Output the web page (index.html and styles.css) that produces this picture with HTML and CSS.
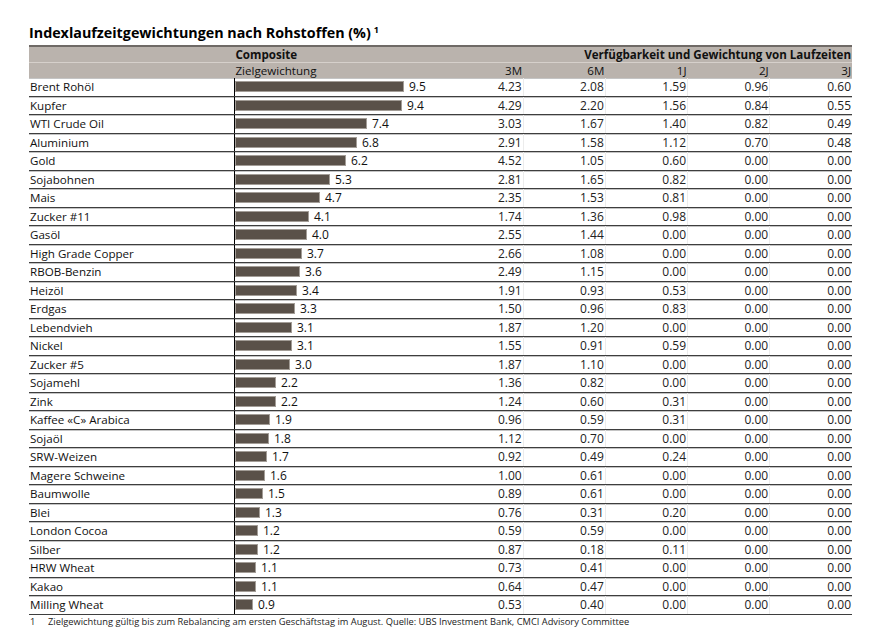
FILE: index.html
```html
<!DOCTYPE html>
<html lang="de">

<head>
    <meta charset="UTF-8">
    <meta name="viewport" content="width=device-width, initial-scale=1.0">
    <title>Indexlaufzeitgewichtungen</title>
    <link rel="stylesheet" href="styles.css">
</head>

<body>
    <div class="page">
        <h1 class="title">Indexlaufzeitgewichtungen nach Rohstoffen (%)<sup>1</sup></h1>
        <table class="weights">
            <colgroup>
                <col class="c-name">
                <col class="c-comp">
                <col class="c-num">
                <col class="c-num">
                <col class="c-num">
                <col class="c-num">
                <col class="c-num">
            </colgroup>
            <thead>
                <tr class="head1">
                    <th></th>
                    <th class="comp">Composite</th>
                    <th class="num" colspan="5">Verfügbarkeit und Gewichtung von Laufzeiten</th>
                </tr>
                <tr class="head2">
                    <th></th>
                    <th class="comp">Zielgewichtung</th>
                    <th class="num">3M</th>
                    <th class="num">6M</th>
                    <th class="num">1J</th>
                    <th class="num">2J</th>
                    <th class="num">3J</th>
                </tr>
            </thead>
            <tbody id="rows"></tbody>
        </table>
        <div class="note"><span class="note-no">1</span>Zielgewichtung gültig bis zum Rebalancing am ersten Geschäftstag im August. Quelle: UBS Investment Bank, CMCI Advisory Committee</div>
    </div>
    <script>
        var data = [
            ["Brent Rohöl", 9.5, "4.23", "2.08", "1.59", "0.96", "0.60"],
            ["Kupfer", 9.4, "4.29", "2.20", "1.56", "0.84", "0.55"],
            ["WTI Crude Oil", 7.4, "3.03", "1.67", "1.40", "0.82", "0.49"],
            ["Aluminium", 6.8, "2.91", "1.58", "1.12", "0.70", "0.48"],
            ["Gold", 6.2, "4.52", "1.05", "0.60", "0.00", "0.00"],
            ["Sojabohnen", 5.3, "2.81", "1.65", "0.82", "0.00", "0.00"],
            ["Mais", 4.7, "2.35", "1.53", "0.81", "0.00", "0.00"],
            ["Zucker #11", 4.1, "1.74", "1.36", "0.98", "0.00", "0.00"],
            ["Gasöl", 4.0, "2.55", "1.44", "0.00", "0.00", "0.00"],
            ["High Grade Copper", 3.7, "2.66", "1.08", "0.00", "0.00", "0.00"],
            ["RBOB-Benzin", 3.6, "2.49", "1.15", "0.00", "0.00", "0.00"],
            ["Heizöl", 3.4, "1.91", "0.93", "0.53", "0.00", "0.00"],
            ["Erdgas", 3.3, "1.50", "0.96", "0.83", "0.00", "0.00"],
            ["Lebendvieh", 3.1, "1.87", "1.20", "0.00", "0.00", "0.00"],
            ["Nickel", 3.1, "1.55", "0.91", "0.59", "0.00", "0.00"],
            ["Zucker #5", 3.0, "1.87", "1.10", "0.00", "0.00", "0.00"],
            ["Sojamehl", 2.2, "1.36", "0.82", "0.00", "0.00", "0.00"],
            ["Zink", 2.2, "1.24", "0.60", "0.31", "0.00", "0.00"],
            ["Kaffee «C» Arabica", 1.9, "0.96", "0.59", "0.31", "0.00", "0.00"],
            ["Sojaöl", 1.8, "1.12", "0.70", "0.00", "0.00", "0.00"],
            ["SRW-Weizen", 1.7, "0.92", "0.49", "0.24", "0.00", "0.00"],
            ["Magere Schweine", 1.6, "1.00", "0.61", "0.00", "0.00", "0.00"],
            ["Baumwolle", 1.5, "0.89", "0.61", "0.00", "0.00", "0.00"],
            ["Blei", 1.3, "0.76", "0.31", "0.20", "0.00", "0.00"],
            ["London Cocoa", 1.2, "0.59", "0.59", "0.00", "0.00", "0.00"],
            ["Silber", 1.2, "0.87", "0.18", "0.11", "0.00", "0.00"],
            ["HRW Wheat", 1.1, "0.73", "0.41", "0.00", "0.00", "0.00"],
            ["Kakao", 1.1, "0.64", "0.47", "0.00", "0.00", "0.00"],
            ["Milling Wheat", 0.9, "0.53", "0.40", "0.00", "0.00", "0.00"]
        ]
        var rows = document.getElementById("rows")
        var html = ""
        for (var i = 0; i < data.length; i++) {
            var d = data[i]
            html += "<tr>"
            html += "<td class='name'>" + d[0] + "</td>"
            html += "<td class='comp'><div class='bar-cell'><span class='bar' style='width:" + Math.round(d[1] * 17.6) + "px'></span>" + d[1].toFixed(1) + "</div></td>"
            for (var j = 2; j < 7; j++) {
                html += "<td class='num'>" + d[j] + "</td>"
            }
            html += "</tr>"
        }
        rows.innerHTML = html
    </script>
</body>

</html>
```
FILE: styles.css
```css
body {
    margin: 0;
    background: #fff;
    color: #111;
    font-family: "Open Sans", "Noto Sans", sans-serif;
}

.page {
    padding: 20px 0 0 29px;
    width: 823px;
}

.title {
    margin: 0 0 2px;
    font-size: 14.3px;
    font-weight: bold;
    line-height: 20px;
    color: #000;
}

.title sup {
    font-size: 9px;
    font-weight: bold;
    margin-left: 3px;
    vertical-align: 5px;
    color: #000;
}

.weights {
    width: 823px;
    border-collapse: collapse;
    table-layout: fixed;
    font-size: 11.6px;
}

.c-name {
    width: 205px;
}

.c-comp {
    width: 206px;
}

.c-num {
    width: 82px;
}

.weights th {
    background: #bab3ad;
    padding: 0 1px;
    height: 15px;
    line-height: 15px;
    font-weight: normal;
    text-align: left;
    color: #111;
}

.head1 th {
    border-top: 2px solid #6f6a66;
    border-bottom: 1px solid #d6d0cb;
    font-weight: bold;
}

.weights th.num,
.weights td.num {
    text-align: right;
}

.weights td {
    height: 17.5px;
    padding: 0 1px;
    line-height: 17px;
    border-bottom: 1px solid #3e3e3e;
    box-shadow: inset 0 1px 0 #c4c4c4;
    white-space: nowrap;
}

.weights td.num {
    border-right: 1px solid #ececec;
    color: #222;
    font-size: 12px;
}

.weights td.num:last-child {
    border-right: 0;
}

.weights td.comp {
    border-left: 1px solid #000;
    padding: 0;
    font-size: 12px;
}

.bar-cell {
    display: flex;
    align-items: center;
    gap: 6px;
}

.bar {
    display: block;
    height: 9px;
    background: #5a5149;
    box-shadow: 0 0 0 1px #a39d97;
    margin-left: 1px;
}

.note {
    display: flex;
    font-size: 9.3px;
    line-height: 14px;
    color: #222;
}

.note-no {
    width: 18px;
    padding-left: 1px;
}
```
